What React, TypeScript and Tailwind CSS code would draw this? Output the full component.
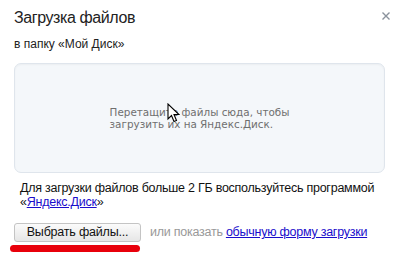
import React from "react";

export default function App() {
  return (
    <div className="relative w-[400px] h-[258px] bg-white overflow-hidden" style={{ fontFamily: '"Liberation Sans", Arial, sans-serif' }}>
      <div className="px-[14px] pt-[8px] flex flex-col">
        <div className="text-[16px] leading-[20px] tracking-[-0.4px] text-[#222]">Загрузка файлов</div>
        <div className="mt-[8px] text-[12px] leading-[16px] text-[#222]">в папку «Мой Диск»</div>
        <div className="mt-[11px] w-[371px] h-[110px] rounded-[7px] border border-[#dfe5ec] bg-[#f4f7fa] flex items-center justify-center shadow-[inset_0_1px_2px_rgba(0,0,0,0.04)]">
          <div className="text-[10.4px] leading-[12px] text-[#6f6f6f]" style={{ fontFamily: '"DejaVu Sans", sans-serif' }}>
            <div>Перетащите файлы сюда, чтобы</div>
            <div>загрузить их на Яндекс.Диск.</div>
          </div>
        </div>
        <div className="mt-[8px] pl-[6px] text-[12.5px] leading-[14px] tracking-[-0.25px] text-[#111]">
          <div>Для загрузки файлов больше 2 ГБ воспользуйтесь программой</div>
          <div>«<span className="text-[#1a0dcc] underline">Яндекс.Диск</span>»</div>
        </div>
        <div className="mt-[14px] flex items-center gap-[9px]">
          <div className="relative">
            <button className="w-[127px] h-[19px] rounded-[3px] border border-[#c4c4c4] bg-gradient-to-b from-[#fbfbfb] to-[#e6e6e6] text-[12.5px] tracking-[-0.2px] text-[#111] leading-[17px] flex items-center justify-center">
              Выбрать файлы...
            </button>
            <div className="absolute left-[-4px] top-[22px] w-[130px] h-[7px] rounded-full bg-[#e8000b]" />
          </div>
          <div className="text-[12.5px] tracking-[-0.25px] text-[#999]">
            или показать <span className="text-[#1a0dcc] underline">обычную форму загрузки</span>
          </div>
        </div>
      </div>
      <svg className="absolute left-[382px] top-[12px]" width="8" height="8" viewBox="0 0 8 8">
        <path d="M0.5 0.5 L7.5 7.5 M7.5 0.5 L0.5 7.5" stroke="#8a929c" strokeWidth="1.4" />
      </svg>
      <svg className="absolute left-[167px] top-[103px]" width="13" height="20" viewBox="0 0 13 20">
        <path d="M1 1 L1 16 L4.5 12.5 L7 18.5 L9.5 17.5 L7 11.5 L12 11.5 Z" fill="white" stroke="black" strokeWidth="1.1" strokeLinejoin="miter" />
      </svg>
    </div>
  );
}
